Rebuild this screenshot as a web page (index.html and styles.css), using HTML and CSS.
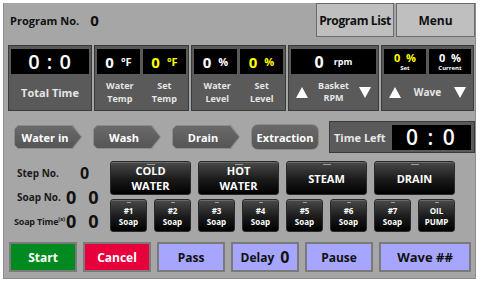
FILE: index.html
```html
<!DOCTYPE html>
<html lang="en">
<head>
    <meta charset="UTF-8">
    <title>Washer Control</title>
    <link rel="stylesheet" href="styles.css">
</head>
<body>
    <div class="panel">
        <div class="top-bar">
            <div class="program-no">Program No. <span class="program-value">0</span></div>
            <div class="top-buttons">
                <button class="top-button">Program List</button>
                <button class="top-button">Menu</button>
            </div>
        </div>

        <div class="cards">
            <div class="card card-time">
                <div class="display big-digits">0 : 0</div>
                <div class="card-label single">Total Time</div>
            </div>
            <div class="card card-wide">
                <div class="display-pair">
                    <div class="display unit-display">0 <span class="unit">°F</span></div>
                    <div class="display unit-display yellow">0 <span class="unit">°F</span></div>
                </div>
                <div class="card-labels">
                    <span>Water<br>Temp</span>
                    <span>Set<br>Temp</span>
                </div>
            </div>
            <div class="card card-wide">
                <div class="display-pair">
                    <div class="display unit-display">0 <span class="unit">%</span></div>
                    <div class="display unit-display yellow">0 <span class="unit">%</span></div>
                </div>
                <div class="card-labels">
                    <span>Water<br>Level</span>
                    <span>Set<br>Level</span>
                </div>
            </div>
            <div class="card card-rpm">
                <div class="display rpm-display">0 <span class="rpm-unit">rpm</span></div>
                <div class="adjust-row">
                    <span class="tri up"></span>
                    <span class="adjust-label">Basket<br>RPM</span>
                    <span class="tri down"></span>
                </div>
            </div>
            <div class="card card-wave">
                <div class="display-pair">
                    <div class="display wave-display yellow">
                        <div class="wave-value">0 <span class="wave-unit">%</span></div>
                        <div class="wave-sub">Set</div>
                    </div>
                    <div class="display wave-display">
                        <div class="wave-value">0 <span class="wave-unit">%</span></div>
                        <div class="wave-sub">Current</div>
                    </div>
                </div>
                <div class="adjust-row">
                    <span class="tri up"></span>
                    <span class="adjust-label">Wave</span>
                    <span class="tri down"></span>
                </div>
            </div>
        </div>

        <div class="steps">
            <div class="step-arrow"><div class="step-inner">Water in</div></div>
            <div class="step-arrow"><div class="step-inner">Wash</div></div>
            <div class="step-arrow"><div class="step-inner">Drain</div></div>
            <div class="step-pill">Extraction</div>
            <div class="time-left">
                <span class="time-left-label">Time Left</span>
                <div class="display time-display">0 : 0</div>
            </div>
        </div>

        <div class="middle">
            <div class="info">
                <div class="info-row">
                    <span class="info-label">Step No.</span>
                    <span class="info-values"><b class="step-value">0</b></span>
                </div>
                <div class="info-row">
                    <span class="info-label">Soap No.</span>
                    <span class="info-values"><b>0</b><b>0</b></span>
                </div>
                <div class="info-row">
                    <span class="info-label soap-time">Soap Time<sup>(s)</sup></span>
                    <span class="info-values"><b>0</b><b>0</b></span>
                </div>
            </div>
            <div class="controls">
                <button class="black-button big">COLD<br>WATER</button>
                <button class="black-button big">HOT<br>WATER</button>
                <button class="black-button big">STEAM</button>
                <button class="black-button big">DRAIN</button>
                <button class="black-button small">#1<br>Soap</button>
                <button class="black-button small">#2<br>Soap</button>
                <button class="black-button small">#3<br>Soap</button>
                <button class="black-button small">#4<br>Soap</button>
                <button class="black-button small">#5<br>Soap</button>
                <button class="black-button small">#6<br>Soap</button>
                <button class="black-button small">#7<br>Soap</button>
                <button class="black-button small">OIL<br>PUMP</button>
            </div>
        </div>

        <div class="bottom-bar">
            <button class="action start">Start</button>
            <button class="action cancel">Cancel</button>
            <button class="action soft">Pass</button>
            <button class="action soft delay">Delay <span class="delay-value">0</span></button>
            <button class="action soft">Pause</button>
            <button class="action soft wave">Wave ##</button>
        </div>
    </div>
</body>
</html>
```

FILE: styles.css
```css
body {
    margin: 0;
    background: #ffffff;
    font-family: "Open Sans", "Noto Sans", sans-serif;
}
button {
    font-family: inherit;
    cursor: pointer;
    padding: 0;
}
.panel {
    box-sizing: border-box;
    width: 473px;
    height: 276px;
    margin: 3px 0 0 3px;
    background: #a6a6a6;
    border: 1px solid #8c8c8c;
    border-top: none;
}

/* top bar */
.top-bar {
    display: flex;
    justify-content: space-between;
    height: 34px;
}
.program-no {
    display: flex;
    align-items: center;
    padding-left: 6px;
    font-size: 11px;
    font-weight: bold;
    color: #111;
}
.program-value {
    font-size: 15px;
    margin-left: 11px;
}
.top-buttons {
    display: flex;
    gap: 2px;
}
.top-button {
    width: 78px;
    height: 34px;
    background: #bfbfbf;
    border: 1px solid #6b6b6b;
    font-size: 12px;
    font-weight: bold;
    letter-spacing: -0.4px;
    white-space: nowrap;
    color: #111;
}
.top-button + .top-button {
    width: 79px;
    letter-spacing: 0;
}

/* cards */
.cards {
    display: flex;
    gap: 2px;
    margin-top: 8px;
    padding-left: 4px;
}
.card {
    box-sizing: border-box;
    height: 66px;
    background: #5a5a5a;
    border: 1px solid #3a3a3a;
    padding: 3px 2px 0;
    display: flex;
    flex-direction: column;
}
.card-time { width: 84px; }
.card-wide { width: 95px; }
.card-rpm { width: 91px; }
.card-wave { width: 93px; }
.display {
    background: #000;
    color: #fff;
    height: 25px;
    display: flex;
    align-items: center;
    justify-content: center;
}
.big-digits {
    font-size: 20px;
    font-weight: 600;
    letter-spacing: 1px;
}
.card-label.single {
    flex: 1;
    display: flex;
    align-items: center;
    justify-content: center;
    font-size: 11px;
    font-weight: bold;
    color: #e6e6e6;
}
.display-pair {
    display: flex;
    gap: 3px;
}
.display-pair .display {
    flex: 1;
}
.unit-display {
    font-size: 15px;
    font-weight: bold;
    gap: 7px;
}
.unit {
    font-size: 11px;
}
.yellow {
    color: #ffff00;
}
.card-labels {
    flex: 1;
    display: flex;
    justify-content: space-around;
    align-items: center;
    text-align: center;
    font-size: 9px;
    font-weight: bold;
    line-height: 13px;
    color: #e6e6e6;
}
.rpm-display {
    font-size: 16px;
    font-weight: bold;
    gap: 10px;
}
.rpm-unit {
    font-size: 9px;
}
.adjust-row {
    flex: 1;
    display: flex;
    align-items: center;
    justify-content: space-between;
    padding: 0 5px;
}
.adjust-label {
    text-align: center;
    font-size: 9px;
    font-weight: bold;
    line-height: 12px;
    color: #e6e6e6;
}
.card-wave .adjust-label {
    font-size: 10px;
}
.tri {
    width: 0;
    height: 0;
    border-left: 6px solid transparent;
    border-right: 6px solid transparent;
}
.tri.up { border-bottom: 11px solid #fff; }
.tri.down { border-top: 11px solid #fff; }
.wave-display {
    flex-direction: column;
    gap: 0;
}
.wave-value {
    font-size: 11px;
    font-weight: bold;
    line-height: 12px;
}
.wave-unit {
    margin-left: 3px;
}
.wave-sub {
    font-size: 6px;
    font-weight: bold;
    line-height: 8px;
    color: #fff;
}

/* step row */
.steps {
    display: flex;
    align-items: center;
    gap: 10px;
    margin-top: 10px;
    padding-left: 10px;
    height: 32px;
}
.step-arrow {
    width: 68px;
    height: 24px;
    background: #8c8c8c;
    clip-path: polygon(4px 0, calc(100% - 9px) 0, 100% 50%, calc(100% - 9px) 100%, 4px 100%, 0 calc(100% - 4px), 0 4px);
    margin-right: 1px;
}
.step-inner {
    height: 22px;
    margin: 1px;
    background: linear-gradient(#6a6a6a, #555555);
    clip-path: polygon(3px 0, calc(100% - 9px) 0, 100% 50%, calc(100% - 9px) 100%, 3px 100%, 0 calc(100% - 3px), 0 3px);
    color: #fff;
    font-size: 11px;
    font-weight: bold;
    display: flex;
    align-items: center;
    justify-content: center;
    padding-right: 6px;
}
.step-pill {
    box-sizing: border-box;
    width: 68px;
    height: 26px;
    border-radius: 7px;
    border: 1px solid #8a8a8a;
    background: linear-gradient(#6a6a6a, #555555);
    color: #fff;
    font-size: 11px;
    font-weight: bold;
    display: flex;
    align-items: center;
    justify-content: center;
}
.time-left {
    box-sizing: border-box;
    width: 146px;
    height: 32px;
    background: #5a5a5a;
    border: 1px solid #3a3a3a;
    display: flex;
    align-items: center;
    padding: 0 3px 0 4px;
    gap: 6px;
}
.time-left-label {
    color: #e6e6e6;
    font-size: 11px;
    font-weight: bold;
    white-space: nowrap;
}
.time-display {
    flex: 1;
    height: 25px;
    font-size: 21px;
    font-weight: 600;
    letter-spacing: 2px;
}

/* middle */
.middle {
    display: flex;
    margin-top: 8px;
}
.info {
    width: 106px;
    display: flex;
    flex-direction: column;
}
.info-row {
    height: 24px;
    display: flex;
    align-items: center;
}
.info-label {
    width: 47px;
    padding-left: 13px;
    font-size: 10px;
    font-weight: bold;
    color: #1a1a1a;
    white-space: nowrap;
}
.info-label.soap-time {
    padding-left: 10px;
    width: 50px;
    font-size: 9px;
    letter-spacing: -0.2px;
}
.info-label sup {
    font-size: 6px;
    line-height: 0;
}
.info-values {
    display: flex;
    gap: 12px;
    padding-left: 2px;
    font-size: 18px;
    color: #111;
}
.step-value {
    margin-left: 14px;
    font-size: 16px;
}
.controls {
    display: grid;
    grid-template-columns: repeat(8, 37px);
    grid-template-rows: 34px 33px;
    column-gap: 7px;
    row-gap: 4px;
}
.black-button {
    position: relative;
    border: 1px solid #2a2a2a;
    border-radius: 3px;
    background: linear-gradient(#4a4a4a, #1a1a1a 55%, #000);
    color: #fff;
    font-weight: bold;
    box-shadow: inset 0 1px 0 #6a6a6a;
}
.black-button::before {
    content: "";
    position: absolute;
    top: 2px;
    left: 50%;
    width: 8px;
    height: 1px;
    margin-left: -4px;
    background: #9a9a9a;
}
.black-button.small::before {
    width: 4px;
    margin-left: -2px;
}
.black-button.big {
    grid-column: span 2;
    font-size: 11px;
    line-height: 15px;
}
.black-button.small {
    font-size: 8px;
    line-height: 11px;
}

/* bottom bar */
.bottom-bar {
    display: flex;
    gap: 6px;
    margin-top: 9px;
    padding-left: 5px;
}
.action {
    width: 68px;
    height: 30px;
    border: 2px solid #7a7a7a;
    font-size: 12px;
    font-weight: bold;
    color: #111;
}
.start {
    background: #008a1f;
    color: #fff;
}
.cancel {
    background: #e8003c;
    color: #fff;
}
.soft {
    background: #a6a6ff;
}
.delay {
    display: flex;
    align-items: center;
    justify-content: center;
    gap: 6px;
}
.delay-value {
    font-size: 16px;
}
.wave {
    width: 92px;
    font-size: 13px;
}
```
